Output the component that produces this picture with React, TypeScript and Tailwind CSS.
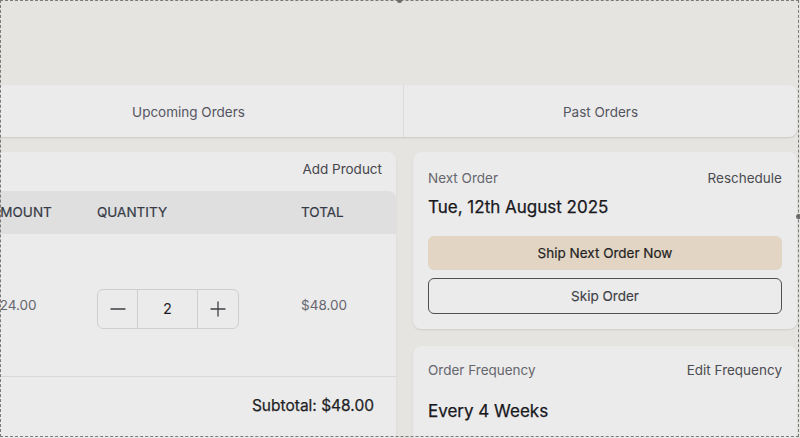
import React from "react";

function Minus() {
  return (
    <svg width="16" height="16" viewBox="0 0 16 16" fill="none">
      <path d="M1 8h14" stroke="#3f3f46" strokeWidth="1.3" strokeLinecap="round" />
    </svg>
  );
}
function Plus() {
  return (
    <svg width="16" height="16" viewBox="0 0 16 16" fill="none">
      <path d="M1 8h14M8 1v14" stroke="#3f3f46" strokeWidth="1.3" strokeLinecap="round" />
    </svg>
  );
}

export default function App() {
  return (
    <div
      className="relative w-[800px] h-[438px] overflow-hidden bg-[#e5e4e0]"
      style={{ fontFamily: "Inter, 'Noto Sans', sans-serif" }}
    >
      <div className="h-[85px]" />
      {/* Tabs */}
      <div className="flex ml-[-26px] w-[823px] h-[52px] bg-[#ebebeb] rounded-lg shadow-[0_1px_2px_rgba(0,0,0,0.12)]">
        <div className="w-[430px] flex items-center justify-center pt-[2px] border-r border-[#dcdcdc] text-[13.5px] text-[#555561]">
          Upcoming Orders
        </div>
        <div className="flex-1 flex items-center justify-center pt-[2px] text-[13.5px] text-[#555561]">
          Past Orders
        </div>
      </div>

      <div className="flex gap-[17px] mt-[15px]">
        {/* Left card */}
        <div className="ml-[-320px] w-[716px] h-[300px] shrink-0 bg-[#ebebeb] rounded-lg shadow-[0_1px_2px_rgba(0,0,0,0.08)] flex flex-col">
          <div className="flex justify-end pr-[14px] pt-[7px] h-[39px] text-[13.5px] leading-5 text-[#45454b]">
            Add Product
          </div>
          <div className="flex h-[43px] items-center bg-[#dfdfe0] rounded-tr-lg text-[13.5px] text-[#353a45] [-webkit-text-stroke:0.2px_#353a45]">
            <div className="w-[295px]" />
            <div className="w-[106px] pl-4">AMOUNT</div>
            <div className="w-[204px] pl-4">QUANTITY</div>
            <div className="flex-1 pl-4">TOTAL</div>
          </div>
          <div className="flex h-[143px] items-center text-[13.5px] text-[#66666e] border-b border-[#d8d8d8]">
            <div className="w-[295px]" />
            <div className="w-[106px] pl-4">$24.00</div>
            <div className="w-[204px] pl-4">
              <div className="mt-[8px] flex w-[142px] h-[40px] rounded-md border border-[#cfcfd2] overflow-hidden">
                <div className="w-[40px] flex items-center justify-center border-r border-[#cfcfd2]">
                  <Minus />
                </div>
                <div className="flex-1 flex items-center justify-center text-[14.5px] text-[#1f1f24] border-r border-[#cfcfd2]">
                  2
                </div>
                <div className="w-[40px] flex items-center justify-center">
                  <Plus />
                </div>
              </div>
            </div>
            <div className="flex-1 pl-4">$48.00</div>
          </div>
          <div className="flex justify-end pr-[22px] pt-[17px] text-[15.5px] leading-6 text-[#1f1f26] [-webkit-text-stroke:0.25px_#1f1f26]">
            Subtotal: $48.00
          </div>
        </div>

        {/* Right column */}
        <div className="w-[384px] shrink-0 flex flex-col gap-[17px]">
          <div className="bg-[#ebebeb] rounded-lg shadow-[0_1px_2px_rgba(0,0,0,0.1)] px-[15px] pt-[16px] pb-[15px]">
            <div className="flex justify-between text-[13.5px] leading-5">
              <span className="text-[#66666e]">Next Order</span>
              <span className="text-[#4b4b51]">Reschedule</span>
            </div>
            <div className="mt-[5px] text-[17px] leading-7 text-[#18181d] [-webkit-text-stroke:0.25px_#18181d]">
              Tue, 12th August 2025
            </div>
            <div className="mt-[15px] h-[34px] rounded-md bg-[#e2d5c3] flex items-center justify-center text-[13.5px] text-[#1f1f24] [-webkit-text-stroke:0.2px_#1f1f24]">
              Ship Next Order Now
            </div>
            <div className="mt-[8px] h-[36px] rounded-md border border-[#4f4f55] flex items-center justify-center text-[13.5px] text-[#3f3f46] [-webkit-text-stroke:0.15px_#3f3f46]">
              Skip Order
            </div>
          </div>
          <div className="bg-[#ebebeb] rounded-lg shadow-[0_1px_2px_rgba(0,0,0,0.1)] px-[15px] pt-[14px] h-[120px]">
            <div className="flex justify-between text-[13.5px] leading-5">
              <span className="text-[#66666e]">Order Frequency</span>
              <span className="text-[#4b4b51]">Edit Frequency</span>
            </div>
            <div className="mt-[17px] text-[17px] leading-7 text-[#18181d] [-webkit-text-stroke:0.25px_#18181d]">
              Every 4 Weeks
            </div>
          </div>
        </div>
      </div>

      {/* dashed selection frame */}
      <div className="pointer-events-none absolute left-0 top-0 w-[799px] h-[437px] border border-dashed border-[#7a7a7a]" />
      <div className="pointer-events-none absolute left-[397px] top-[-2px] w-[5px] h-[5px] rounded-full bg-[#6b6b6b]" />
      <div className="pointer-events-none absolute left-[796px] top-[214px] w-[5px] h-[5px] rounded-full bg-[#6b6b6b]" />
    </div>
  );
}
